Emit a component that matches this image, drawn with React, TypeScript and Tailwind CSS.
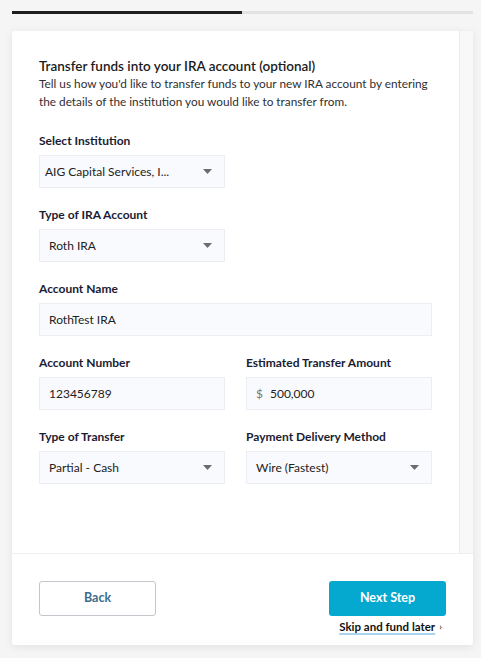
import React from 'react';

const font = { fontFamily: 'Lato, "Open Sans", sans-serif' };

const Caret = () => (
  <svg width="9" height="5" viewBox="0 0 9 5" className="shrink-0">
    <path d="M0 0 L9 0 L4.5 5 Z" fill="#6b6b70" />
  </svg>
);

const Label = ({ children }: { children: React.ReactNode }) => (
  <div className="text-[12px] font-bold leading-[18px] text-[#1b1b33] mb-[5px]">{children}</div>
);

const Select = ({ value, pad = 'pl-[9px]' }: { value: string; pad?: string }) => (
  <div className={`h-[33px] flex items-center justify-between bg-[#f9fafd] border border-[#eceef3] ${pad} pr-[12px] text-[12px] text-[#222]`}>
    <span>{value}</span>
    <Caret />
  </div>
);

const Input = ({ value, prefix }: { value: string; prefix?: string }) => (
  <div className="h-[33px] flex items-center bg-[#f9fafd] border border-[#eceef3] pl-[9px] text-[12px] text-[#222]">
    {prefix && <span className="text-[#777] mr-[7px]">{prefix}</span>}
    <span>{value}</span>
  </div>
);

export default function App() {
  return (
    <div className="min-h-[658px] bg-[#f5f5f5] pl-[12px] pr-[8px] pt-[11px] pb-[16px]" style={font}>
      {/* progress */}
      <div className="h-[3px] bg-[#e2e2e2] flex">
        <div className="w-[230px] bg-[#1e1e1e]" />
      </div>

      <div className="mt-[17px] bg-white rounded-[3px] shadow-[0_2px_8px_rgba(0,0,0,0.08)] overflow-hidden">
        <div className="h-[522px] flex">
          <div className="flex-1 pl-[27px] pr-[27px] pt-[26px]">
            <h1 className="text-[13.5px] font-semibold leading-[18px] text-[#1b1b22]">
              Transfer funds into your IRA account (optional)
            </h1>
            <p className="text-[11.8px] leading-[18px] text-[#2f2f33]">
              Tell us how you'd like to transfer funds to your new IRA account by entering the details of the institution you would like to transfer from.
            </p>

            <div className="mt-[21px] flex flex-col gap-[18px]">
              <div className="w-[186px]">
                <Label>Select Institution</Label>
                <Select value="AIG Capital Services, I..." pad="pl-[5px]" />
              </div>
              <div className="w-[186px]">
                <Label>Type of IRA Account</Label>
                <Select value="Roth IRA" />
              </div>
              <div>
                <Label>Account Name</Label>
                <Input value="RothTest IRA" />
              </div>
              <div className="grid grid-cols-2 gap-x-[21px]">
                <div>
                  <Label>Account Number</Label>
                  <Input value="123456789" />
                </div>
                <div>
                  <Label>Estimated Transfer Amount</Label>
                  <Input value="500,000" prefix="$" />
                </div>
              </div>
              <div className="grid grid-cols-2 gap-x-[21px]">
                <div>
                  <Label>Type of Transfer</Label>
                  <Select value="Partial - Cash" />
                </div>
                <div>
                  <Label>Payment Delivery Method</Label>
                  <Select value="Wire (Fastest)" />
                </div>
              </div>
            </div>
          </div>
          {/* scrollbar track */}
          <div className="w-[14px] bg-[#f8f8f8] border-l border-[#ececec]" />
        </div>

        <div className="border-t border-[#efefef] px-[27px] pt-[27px] pb-[10px] flex justify-between">
          <button className="w-[117px] h-[35px] border border-[#c3c6cc] rounded-[3px] text-[12.5px] font-bold text-[#3e6c8f] bg-white">
            Back
          </button>
          <div className="flex flex-col items-end">
            <button className="w-[117px] h-[35px] rounded-[3px] bg-[#05a9cf] text-[12.5px] font-bold text-white">
              Next Step
            </button>
            <div className="mt-[2px] mr-[4px] flex items-center gap-[4px] text-[11.5px] font-bold text-[#111]">
              <span className="underline decoration-[#a9d4ee] decoration-[2px] underline-offset-[2px]">Skip and fund later</span>
              <span className="text-[10px] font-normal">›</span>
            </div>
          </div>
        </div>
      </div>
    </div>
  );
}
